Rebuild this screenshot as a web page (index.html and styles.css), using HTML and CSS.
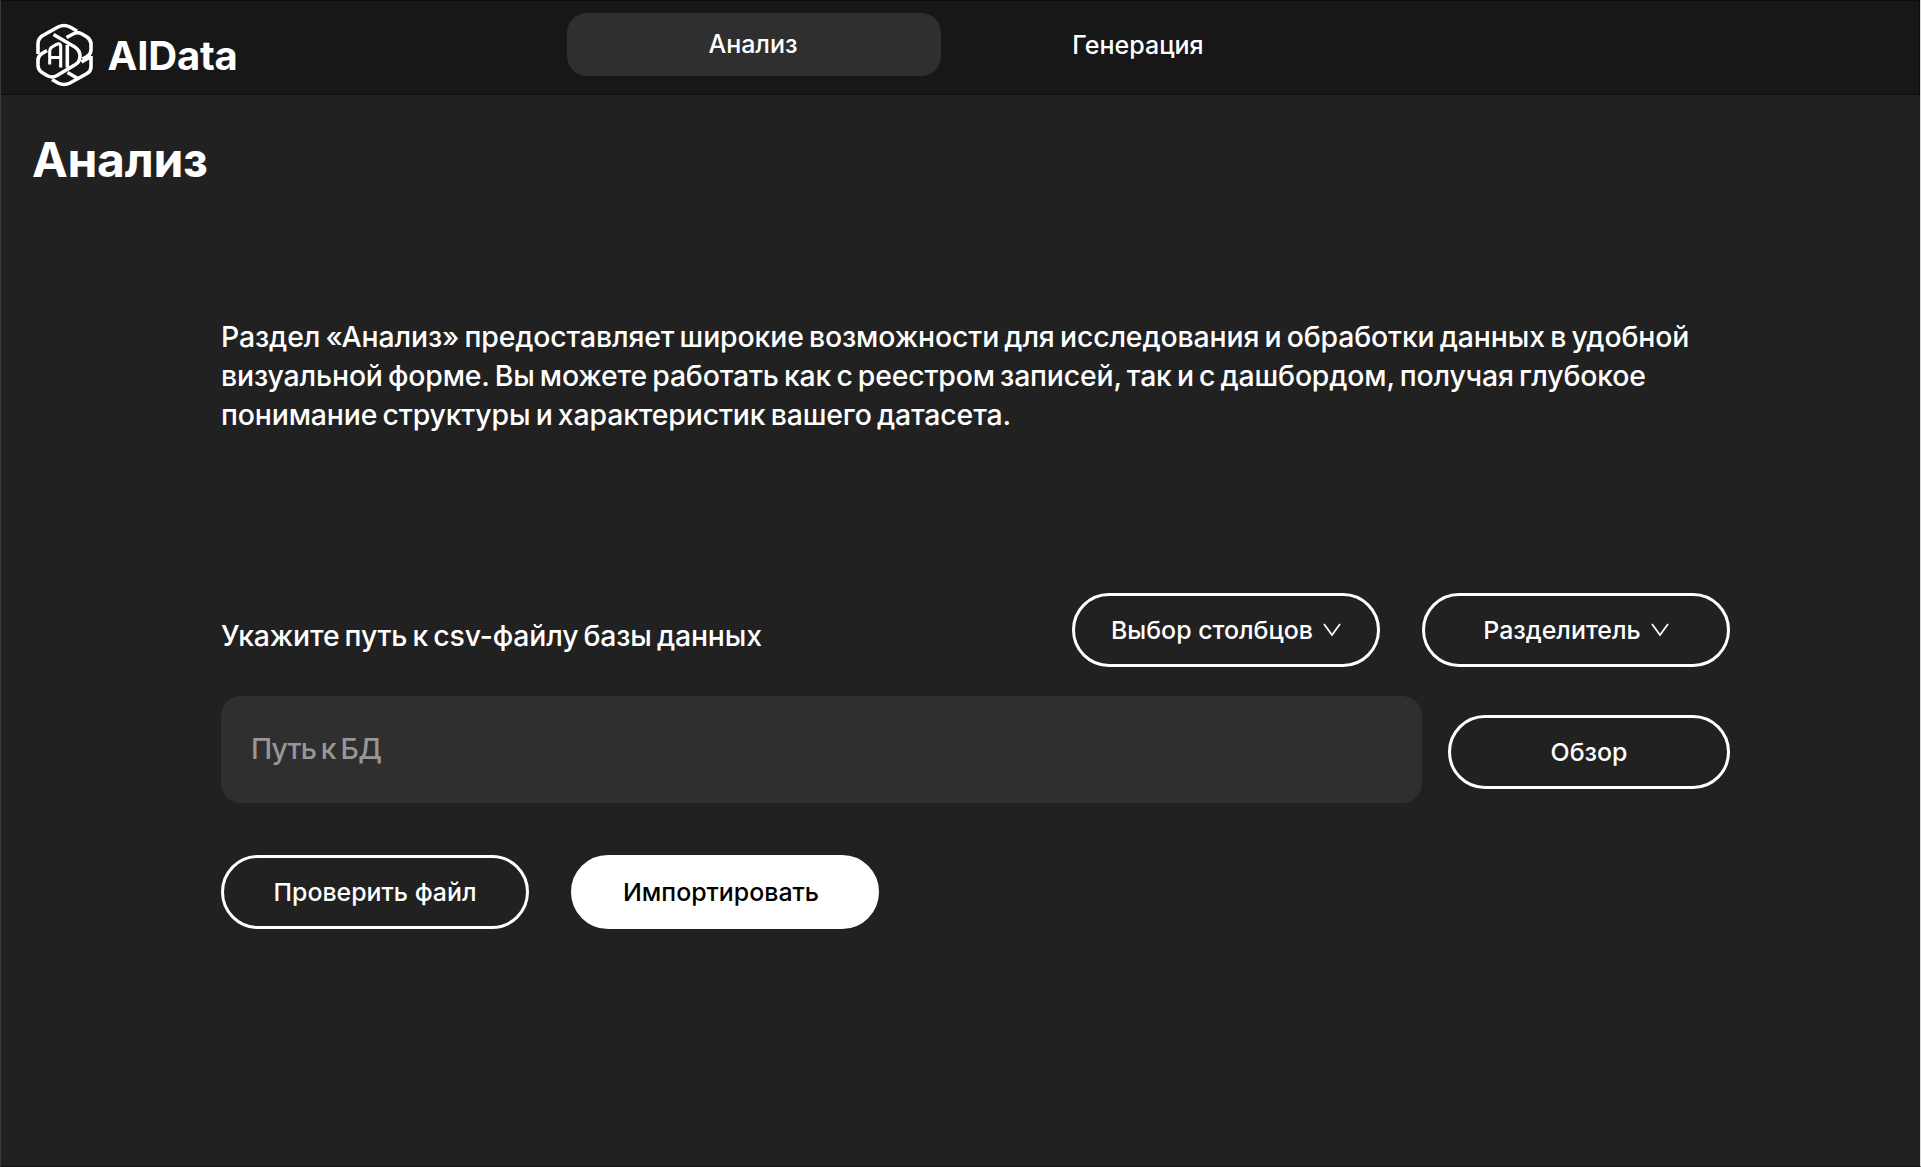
FILE: index.html
```html
<!DOCTYPE html>
<html lang="ru">
<head>
<meta charset="utf-8">
<title>AIData</title>
<link rel="stylesheet" href="styles.css">
</head>
<body>
<div class="app">
  <header class="header">
    <a class="brand">
      <svg class="logo" viewBox="0 0 80 80" width="80" height="80" fill="none" stroke="#fff" stroke-width="3.6">
        <path d="M14 40V30Q14 25 18 22L34 13Q40 10 46 13L53 17"/>
        <path d="M42.500 23.500L50 19.500Q54 17.500 58 20L63 23Q67 26 67 30V36Q67 40 63 42.500L58.500 45"/>
        <path d="M29.500 20.500L50 32.500Q56 36 56 42Q56 48 51.500 50.500L33 61.500Q28 64.500 23 61.500L18 58.500Q14 56 14 51V46Q14 42 18 39.500L23 36.500"/>
        <path d="M67 42V53Q67 57 63 59.500L46 69Q40 72 34 69L28 65.500"/>
        <path d="M57.500 48L67 42.500M43.500 58.500L53 64"/>
        <path d="M25.700 50.500V37.500Q25.700 34.500 28 33L32.500 30.500Q36.700 28.500 36.700 32.500V53.500M25.700 43.500H36.700" stroke-width="3.100"/>
        <path d="M43.300 31V53.500" stroke-width="3.600"/>
      </svg>
      <span class="brand-name">AIData</span>
    </a>
    <nav class="nav">
      <a class="tab tab-active">Анализ</a>
      <a class="tab tab-second">Генерация</a>
    </nav>
  </header>
  <main class="main">
    <h1 class="title">Анализ</h1>
    <p class="intro">
      <span class="line line-1">Раздел «Анализ» предоставляет широкие возможности для исследования и обработки данных в удобной</span>
      <span class="line line-2">визуальной форме. Вы можете работать как с реестром записей, так и с дашбордом, получая глубокое</span>
      <span class="line line-3">понимание структуры и характеристик вашего датасета.</span>
    </p>
    <section class="form">
      <div class="row row-options">
        <label class="label"><span>Укажите путь к csv-файлу базы данных</span></label>
        <div class="selects">
          <button class="btn"><span>Выбор столбцов</span><svg class="chevron" viewBox="0 0 18 14" width="18" height="14"><path d="M1 1L9 12L17 1"/></svg></button>
          <button class="btn"><span>Разделитель</span><svg class="chevron" viewBox="0 0 18 14" width="18" height="14"><path d="M1 1L9 12L17 1"/></svg></button>
        </div>
      </div>
      <div class="row row-path">
        <div class="field"><span>Путь к БД</span></div>
        <button class="btn btn-browse"><span>Обзор</span></button>
      </div>
      <div class="actions">
        <button class="btn"><span>Проверить файл</span></button>
        <button class="btn btn-primary"><span>Импортировать</span></button>
      </div>
    </section>
  </main>
</div>
</body>
</html>
```
FILE: styles.css
```css
* { box-sizing: border-box; }
body {
  margin: 0;
  background: #212121;
  color: #fff;
  font-family: Inter, sans-serif;
}
.app {
  height: 1167px;
  border-left: 1px solid #3a3a3a;
  border-right: 1px solid #dcdcdc;
  border-bottom: 1px solid #141414;
  overflow: hidden;
}
.header {
  display: flex;
  height: 95px;
  background: #171717;
  border: 1px solid #0d0d0d;
  border-left: 0;
}
.brand { display: flex; width: 566px; padding: 13px 0 0 23px; }
.logo { flex: none; }
.brand-name {
  margin: 18px 0 0 3.5px;
  font-size: 40px;
  line-height: 48px;
  font-weight: 700;
  letter-spacing: -0.2px;
}
.nav { display: flex; padding-top: 12px; gap: 10px; }
.tab {
  width: 374px;
  height: 63px;
  border-radius: 20px;
  font-size: 25px;
  font-weight: 450;
  line-height: 63px;
  text-align: center;
}
.tab-active { padding-right: 2px; background: #2f2f2f; }
.tab-second { padding-top: 1px; }
.main { display: flex; flex-direction: column; }
.title {
  margin: 35px 0 0 31px;
  font-size: 48px;
  line-height: 60px;
  font-weight: 700;
  letter-spacing: -0.3px;
}
.intro {
  display: flex;
  flex-direction: column;
  align-items: flex-start;
  margin: 127px 0 0 220px;
  font-size: 28.4px;
  line-height: 39px;
  font-weight: 470;
  letter-spacing: -0.13px;
  word-spacing: -2.2px;
}
.line { white-space: nowrap; }
.line-2 { letter-spacing: -0.16px; }
.form { width: 1509px; margin: 159px 0 0 220px; }
.row { display: flex; justify-content: space-between; }
.label {
  padding-top: 23px;
  font-size: 28.4px;
  line-height: 40px;
  font-weight: 470;
  letter-spacing: -0.17px;
  word-spacing: -2.2px;
}
.selects, .actions { display: flex; gap: 42px; }
.btn {
  display: flex;
  align-items: center;
  justify-content: center;
  gap: 10px;
  width: 308px;
  height: 74px;
  padding: 0;
  border: 3px solid #fff;
  border-radius: 37px;
  background: transparent;
  color: #fff;
  font: 450 24.9px/30px Inter, sans-serif;
  white-space: nowrap;
}
.btn-primary { padding-right: 8px; background: #fff; color: #000; font-weight: 500; }
.btn-browse { width: 282px; margin-top: 19px; }
.chevron { fill: none; stroke: #fff; stroke-width: 1.8; }
.row-path { margin-top: 29px; }
.field {
  width: 1201px;
  height: 107px;
  padding: 33px 30px;
  border-radius: 20px;
  background: #2f2f2f;
  color: #979797;
  font-size: 28.4px;
  line-height: 40px;
  font-weight: 450;
  letter-spacing: -0.8px;
  word-spacing: -2px;
}
.actions { margin-top: 52px; }
```
